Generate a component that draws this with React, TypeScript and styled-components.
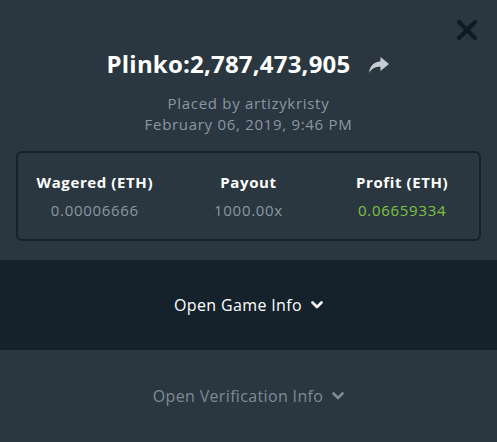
import { FC } from 'react'
import styled, { createGlobalStyle } from 'styled-components'

const GlobalStyle = createGlobalStyle`
  html, body {
    margin: 0;
    padding: 0;
    background: #2a3740;
  }
  body {
    font-family: 'Open Sans', Lato, sans-serif;
  }
`

const Chevron: FC<{ color: string }> = ({ color }) => (
  <svg width="12" height="8" viewBox="0 0 12 8">
    <path d="M1.5 1.5 L6 6 L10.5 1.5" fill="none" stroke={color} strokeWidth="2.6" strokeLinecap="round" strokeLinejoin="round" />
  </svg>
)

const stats = [
  { label: 'Wagered (ETH)', value: '0.00006666' },
  { label: 'Payout', value: '1000.00x' },
  { label: 'Profit (ETH)', value: '0.06659334', win: true },
]

const App: FC = () => {
  return (
    <Modal>
      <GlobalStyle />
      <CloseButton aria-label="close">
        <svg width="22" height="22" viewBox="0 0 22 22">
          <path d="M3 3 L19 19 M19 3 L3 19" stroke="#0f1a22" strokeWidth="4.2" strokeLinecap="round" />
        </svg>
      </CloseButton>

      <Header>
        <TitleRow>
          <Title>Plinko:2,787,473,905</Title>
          <ShareIcon width="22" height="18" viewBox="0 0 22 18">
            <path
              d="M12.5 1 L21 8 L12.5 15 L12.5 10.8 C7 10.8 3.6 12.6 1 17 C1.8 10.2 5.6 6 12.5 5.3 Z"
              fill="#c6ccd2"
            />
          </ShareIcon>
        </TitleRow>
        <Meta>Placed by artizykristy</Meta>
        <Meta>February 06, 2019, 9:46 PM</Meta>
      </Header>

      <StatsBox>
        {stats.map((s) => (
          <Stat key={s.label}>
            <StatLabel>{s.label}</StatLabel>
            <StatValue win={s.win}>{s.value}</StatValue>
          </Stat>
        ))}
      </StatsBox>

      <Toggle dark>
        Open Game Info <Chevron color="#ffffff" />
      </Toggle>
      <Toggle>
        Open Verification Info <Chevron color="#7d8b97" />
      </Toggle>
    </Modal>
  )
}

const Modal = styled.div`
  position: relative;
  width: 497px;
  height: 442px;
  background: #2a3740;
  display: flex;
  flex-direction: column;
  overflow: hidden;
`

const CloseButton = styled.div`
  position: absolute;
  top: 19px;
  right: 19px;
  width: 22px;
  height: 22px;
  cursor: pointer;
`

const Header = styled.div`
  display: flex;
  flex-direction: column;
  align-items: center;
  padding-top: 47px;
`

const TitleRow = styled.div`
  display: flex;
  align-items: center;
  gap: 18px;
  margin-bottom: 12px;
`

const Title = styled.h1`
  margin: 0;
  font-size: 24px;
  line-height: 34px;
  font-weight: 700;
  color: #ffffff;
  letter-spacing: 0.2px;
`

const ShareIcon = styled.svg`
  margin-top: 2px;
`

const Meta = styled.div`
  font-size: 15px;
  line-height: 21px;
  color: #8a96a1;
  letter-spacing: 0.7px;
`

const StatsBox = styled.div`
  box-sizing: border-box;
  margin: 16px 16px 0 16px;
  height: 90px;
  border: 2px solid #16212a;
  border-radius: 6px;
  display: grid;
  grid-template-columns: 1fr 1fr 1fr;
  align-content: center;
`

const Stat = styled.div`
  display: flex;
  flex-direction: column;
  align-items: center;
  gap: 8px;
`

const StatLabel = styled.div`
  font-size: 15px;
  font-weight: 700;
  color: #ffffff;
  line-height: 20px;
  letter-spacing: 0.6px;
`

const StatValue = styled.div<{ win?: boolean }>`
  font-size: 15px;
  line-height: 20px;
  letter-spacing: 0.7px;
  color: ${({ win }) => (win ? '#7dc243' : '#8a96a1')};
`

const Toggle = styled.div<{ dark?: boolean }>`
  margin-top: ${({ dark }) => (dark ? '19px' : '0')};
  height: ${({ dark }) => (dark ? '90px' : '92px')};
  flex-shrink: 0;
  background: ${({ dark }) => (dark ? '#15212b' : '#2a3740')};
  color: ${({ dark }) => (dark ? '#ffffff' : '#7d8b97')};
  display: flex;
  align-items: center;
  justify-content: center;
  gap: 9px;
  font-size: 16px;
  letter-spacing: 0.35px;
  cursor: pointer;
`

export default App
